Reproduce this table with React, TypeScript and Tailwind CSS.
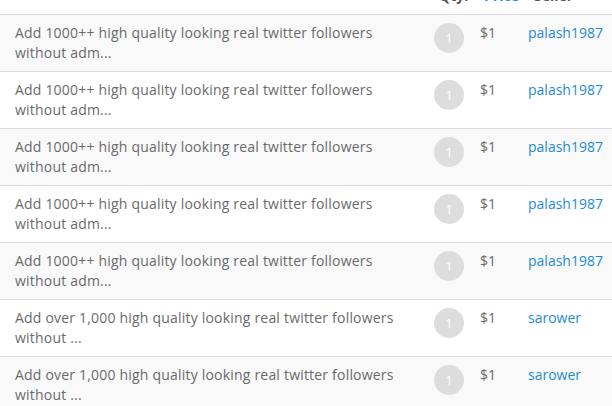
import React from "react";

type Row = { title: string; qty: number; price: string; seller: string };

const rows: Row[] = [
  { title: "Add 1000++ high quality looking real twitter followers without adm...", qty: 1, price: "$1", seller: "palash1987" },
  { title: "Add 1000++ high quality looking real twitter followers without adm...", qty: 1, price: "$1", seller: "palash1987" },
  { title: "Add 1000++ high quality looking real twitter followers without adm...", qty: 1, price: "$1", seller: "palash1987" },
  { title: "Add 1000++ high quality looking real twitter followers without adm...", qty: 1, price: "$1", seller: "palash1987" },
  { title: "Add 1000++ high quality looking real twitter followers without adm...", qty: 1, price: "$1", seller: "palash1987" },
  { title: "Add over 1,000 high quality looking real twitter followers without ...", qty: 1, price: "$1", seller: "sarower" },
  { title: "Add over 1,000 high quality looking real twitter followers without ...", qty: 1, price: "$1", seller: "sarower" },
];

export default function App() {
  return (
    <div className="w-[612px] h-[406px] overflow-hidden bg-white font-['Open_Sans',sans-serif] text-[14px] leading-[20px] text-[#6a6a6a]">
      <table className="-mt-[22px] w-[612px] table-fixed border-collapse">
        <colgroup>
          <col className="w-[426px]" />
          <col className="w-[46px]" />
          <col className="w-[48px]" />
          <col />
        </colgroup>
        <thead>
          <tr className="border-b border-[#ddd]">
            <th className="p-2"></th>
            <th className="py-2 pl-[13px] pr-0 text-left font-bold text-[#555] whitespace-nowrap">Qty.</th>
            <th className="py-2 pl-[12px] pr-0 text-left font-bold text-[#1e8bd1] whitespace-nowrap">Price</th>
            <th className="py-2 pl-[14px] pr-0 text-left font-bold text-[#555] whitespace-nowrap">Seller</th>
          </tr>
        </thead>
        <tbody>
          {rows.map((r, i) => (
            <tr key={i} className={`border-b border-[#ddd] ${i % 2 === 0 ? "bg-[#f9f9f9]" : "bg-white"}`}>
              <td className="py-2 pl-[15px] pr-2 align-top tracking-[0.2px]">{r.title}</td>
              <td className="py-2 px-2 align-top">
                <div className="w-[30px] h-[30px] rounded-full bg-[#ddd] text-white text-[13px] flex items-center justify-center">
                  {r.qty}
                </div>
              </td>
              <td className="py-2 px-2 align-top">{r.price}</td>
              <td className="py-2 px-2 align-top">
                <a className="text-[#1e8bd1]">{r.seller}</a>
              </td>
            </tr>
          ))}
        </tbody>
      </table>
    </div>
  );
}
